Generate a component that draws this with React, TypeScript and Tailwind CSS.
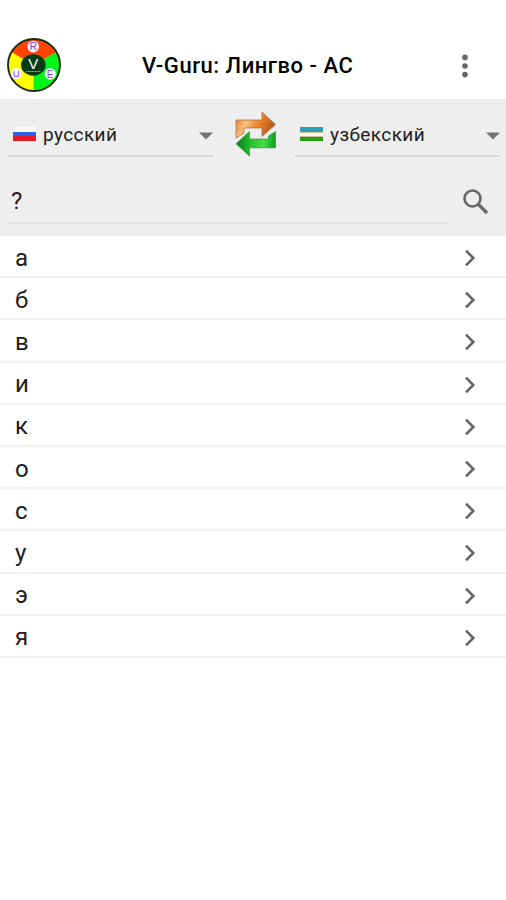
import React, { useState } from 'react';

const text = {
  title: 'V-Guru: Лингво - АС',
  from: 'русский',
  to: 'узбекский',
  menu: 'Меню',
  swap: 'Поменять языки',
  search: 'Поиск',
};

const LETTERS = ['а', 'б', 'в', 'и', 'к', 'о', 'с', 'у', 'э', 'я'];

const Logo: React.FC = () => (
  <svg viewBox="0 0 56 56" className="h-14 w-14 shrink-0">
    <circle cx="28" cy="28" r="26" fill="#ffff00" />
    <path d="M27.5 28 L5.5 15 A26 26 0 0 1 50.5 15 Z" fill="#ff4500" />
    <path d="M27.5 28 L50.5 15 A26 26 0 0 1 27.5 54 Z" fill="#00f51a" />
    <circle cx="28" cy="28" r="26" fill="none" stroke="#142b12" strokeWidth="1.9" />
    <ellipse cx="27.3" cy="28" rx="12.3" ry="10.7" fill="#063b16" />
    <circle cx="27.2" cy="9.6" r="5.8" fill="#fff5ff" />
    <circle cx="10.2" cy="36.5" r="5.5" fill="#fff5ff" />
    <circle cx="44.2" cy="37" r="5.7" fill="#fff5ff" />
    <g fontFamily="Liberation Sans, sans-serif" textAnchor="middle">
      <text x="27.2" y="13.3" fontSize="10.5" fill="#8040f0">R</text>
      <text x="10.2" y="40" fontSize="9.5" fill="#8040f0">U</text>
      <text x="44.2" y="40.6" fontSize="10" fill="#8040f0">E</text>
      <text x="27.3" y="32" fontSize="15" fill="#ffffff">V</text>
    </g>
    <path d="M20 34.5h15" stroke="#8fae91" strokeWidth="1" strokeDasharray="1.5 0.6" />
  </svg>
);

const RussianFlag: React.FC = () => (
  <span className="flex h-3.5 w-[23px] flex-col">
    <span className="flex-1 bg-[#f8f8fa]" />
    <span className="flex-1 bg-[#2565ee]" />
    <span className="flex-1 bg-[#e91722]" />
  </span>
);

const UzbekFlag: React.FC = () => (
  <span className="flex h-3.5 w-[23px] flex-col">
    <span className="flex-1 bg-[#2aa1b9]" />
    <span className="h-[5px] border-y border-[#d6b995] bg-[#fffbed]" />
    <span className="flex-1 bg-[#269d17]" />
  </span>
);

const SwapIcon: React.FC = () => (
  <svg viewBox="0 0 44 48" className="h-12 w-11">
    <defs>
      <linearGradient id="orange" x1="0" y1="0" x2="1" y2="0.3">
        <stop offset="0" stopColor="#dc7627" />
        <stop offset="0.35" stopColor="#f9c080" />
        <stop offset="0.62" stopColor="#f0862a" />
        <stop offset="1" stopColor="#b95d1b" />
      </linearGradient>
      <linearGradient id="green" x1="0" y1="0" x2="1" y2="0">
        <stop offset="0" stopColor="#087b19" />
        <stop offset="0.35" stopColor="#20ba2c" />
        <stop offset="0.7" stopColor="#42e045" />
        <stop offset="1" stopColor="#0b9f1e" />
      </linearGradient>
    </defs>
    <path d="M2 29V11H28V3L41.5 15.5L28 27.5V19H10V24Z" fill="url(#orange)" stroke="#a97750" strokeWidth="0.8" />
    <path d="M41.5 22.5V38.8H15.5V47L2 34.8L15.5 22.5V30H34.5V27Z" fill="url(#green)" stroke="#3a9b48" strokeWidth="0.8" />
  </svg>
);

interface LanguageSelectProps {
  flag: React.ReactNode;
  label: string;
}

const LanguageSelect: React.FC<LanguageSelectProps> = ({ flag, label }) => (
  <button className="flex h-11 w-[205px] items-center border-b-2 border-[#dcdcdc] pl-[5px] text-left">
    {flag}
    <span className="mt-0.5 ml-[7px] flex-1 text-[19px] leading-6 tracking-[0.4px] text-[#202020]">{label}</span>
    <svg viewBox="0 0 14 8" className="mt-1 h-2 w-3.5">
      <path d="M0 0.5h14L7 7.5Z" fill="#757575" />
    </svg>
  </button>
);

const App: React.FC = () => {
  const [query, setQuery] = useState('?');

  return (
    <div className="min-h-[900px] w-full bg-white font-[Roboto,sans-serif] text-[#202020]">
      <header className="flex h-[99px] items-center pt-[31px] pl-1.5">
        <Logo />
        <h1 className="mt-0.5 ml-20 flex-1 text-[22px] leading-7 font-medium tracking-[0.53px] whitespace-nowrap text-black">{text.title}</h1>
        <button aria-label={text.menu} className="mt-0.5 mr-8">
          <svg viewBox="0 0 18 28" className="h-7 w-[18px]">
            <circle cx="9" cy="5.4" r="2.8" fill="#666" />
            <circle cx="9" cy="14" r="2.8" fill="#666" />
            <circle cx="9" cy="22.6" r="2.8" fill="#666" />
          </svg>
        </button>
      </header>

      <section className="h-[137px] bg-[#eeeeee] pt-3.5">
        <div className="flex justify-between pr-1.5 pl-2">
          <LanguageSelect flag={<RussianFlag />} label={text.from} />
          <button aria-label={text.swap} className="-mt-1 ml-[3px] h-12">
            <SwapIcon />
          </button>
          <LanguageSelect flag={<UzbekFlag />} label={text.to} />
        </div>
        <div className="mt-5 flex items-center pl-2">
          <input value={query} onChange={event => setQuery(event.target.value)} className="h-[47px] w-[440px] border-b-2 border-[#e2e2e2] bg-transparent pt-0.5 pl-[3px] text-2xl outline-none" />
          <button aria-label={text.search} className="mt-0.5 ml-[15px]">
            <svg viewBox="0 0 26 26" className="h-[26px] w-[26px]" fill="none" stroke="#666">
              <circle cx="9.5" cy="9.5" r="8" strokeWidth="2.6" />
              <path d="M15.5 15.5L24 24" strokeWidth="3.2" />
            </svg>
          </button>
        </div>
      </section>

      <ul>
        {LETTERS.map(letter => (
          <li key={letter} className="flex h-[42.2px] items-center justify-between border-b-2 border-[#f2f2f2] pr-[30px] pl-[15px]">
            <span className="mt-[3px] text-2xl">{letter}</span>
            <svg viewBox="0 0 12 18" className="mt-1 h-[18px] w-3" fill="none" stroke="#666" strokeWidth="2.6">
              <path d="M2 1.7L9.3 9L2 16.3" />
            </svg>
          </li>
        ))}
      </ul>
    </div>
  );
};

export default App;
